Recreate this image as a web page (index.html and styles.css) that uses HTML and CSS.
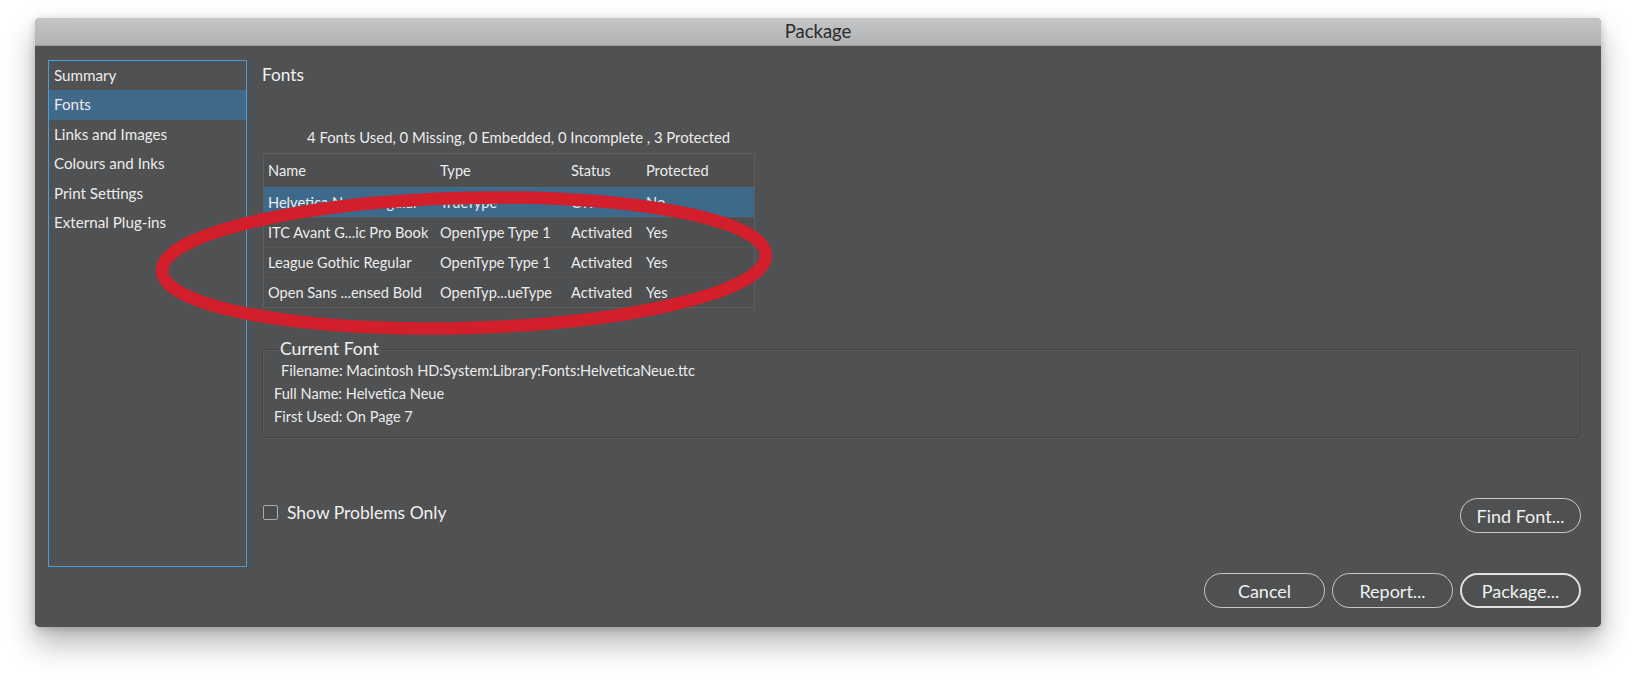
FILE: index.html
```html
<!DOCTYPE html>
<html>
<head>
<meta charset="utf-8">
<title>Package</title>
<link rel="stylesheet" href="styles.css">
</head>
<body>
<div class="window">
  <div class="titlebar">Package</div>
  <div class="content">
    <ul class="sidebar">
      <li class="nav-item">Summary</li>
      <li class="nav-item selected">Fonts</li>
      <li class="nav-item">Links and Images</li>
      <li class="nav-item">Colours and Inks</li>
      <li class="nav-item">Print Settings</li>
      <li class="nav-item">External Plug-ins</li>
    </ul>
    <div class="main">
      <div class="heading">Fonts</div>
      <div class="summary">4 Fonts Used, 0 Missing, 0 Embedded, 0 Incomplete , 3 Protected</div>
      <div class="table">
        <div class="row head">
          <span>Name</span><span>Type</span><span>Status</span><span>Protected</span>
        </div>
        <div class="row selected">
          <span>Helvetica Neue Regular</span><span>TrueType</span><span>OK</span><span>No</span>
        </div>
        <div class="row">
          <span>ITC Avant G...ic Pro Book</span><span>OpenType Type 1</span><span>Activated</span><span>Yes</span>
        </div>
        <div class="row">
          <span>League Gothic Regular</span><span>OpenType Type 1</span><span>Activated</span><span>Yes</span>
        </div>
        <div class="row">
          <span>Open Sans ...ensed Bold</span><span>OpenTyp...ueType</span><span>Activated</span><span>Yes</span>
        </div>
      </div>
      <fieldset class="current">
        <legend>Current Font</legend>
        <div class="info first">Filename: Macintosh HD:System:Library:Fonts:HelveticaNeue.ttc</div>
        <div class="info">Full Name: Helvetica Neue</div>
        <div class="info">First Used: On Page 7</div>
      </fieldset>
      <div class="options">
        <label class="check"><span class="box"></span>Show Problems Only</label>
        <button class="btn">Find Font...</button>
      </div>
      <div class="actions">
        <button class="btn">Cancel</button>
        <button class="btn">Report...</button>
        <button class="btn default">Package...</button>
      </div>
    </div>
  </div>
</div>
<svg class="annotation" width="1636" height="679" viewBox="0 0 1636 679">
  <ellipse cx="464" cy="263" rx="302" ry="65" fill="none" stroke="#d21f2b" stroke-width="12.5" transform="rotate(-1.5 464 263)"/>
</svg>
</body>
</html>
```

FILE: styles.css
```css
* { box-sizing: border-box; }
html, body {
  margin: 0;
  padding: 0;
  background: #ffffff;
  width: 1636px;
  height: 679px;
  overflow: hidden;
  position: relative;
  font-family: "Lato", "Open Sans", "Liberation Sans", sans-serif;
}
.window {
  margin: 18px 0 0 35px;
  width: 1566px;
  height: 609px;
  border-radius: 5px;
  overflow: hidden;
  display: flex;
  flex-direction: column;
  box-shadow: 0 16px 30px rgba(0,0,0,0.30), 0 2px 8px rgba(0,0,0,0.18);
  background: #505152;
}
.titlebar {
  height: 28px;
  flex: 0 0 28px;
  background: linear-gradient(#c5c6c8, #b1b2b4);
  border-bottom: 1px solid #9a9b9d;
  color: #2b2b2b;
  font-size: 18.5px;
  line-height: 27px;
  text-align: center;
}
.content {
  flex: 1;
  display: flex;
  padding: 14px 20px 19px 13px;
  background: #505152;
  color: #ececec;
}
.sidebar {
  list-style: none;
  margin: 0;
  padding: 0;
  width: 199px;
  height: 507px;
  flex: 0 0 199px;
  border: 1px solid #4b9fd4;
}
.nav-item {
  height: 29.4px;
  line-height: 29.4px;
  padding-left: 5px;
  font-size: 15.2px;
  color: #ececec;
}
.nav-item.selected { background: #41698a; }
.main {
  flex: 1;
  margin-left: 15px;
  display: flex;
  flex-direction: column;
}
.heading {
  height: 30px;
  line-height: 30px;
  font-size: 17.3px;
  color: #f0f0f0;
}
.summary {
  margin-top: 37px;
  height: 20px;
  line-height: 20px;
  padding-left: 45px;
  font-size: 14.85px;
}
.table {
  margin-top: 6px;
  margin-left: 1px;
  width: 492px;
  border: 1px solid #5d5e5f;
  background: #4e4f50;
}
.row {
  display: grid;
  grid-template-columns: 172px 131px 75px 1fr;
  height: 30px;
  align-items: center;
  font-size: 14.6px;
  border-top: 1px solid rgba(255,255,255,0.04);
}
.row span { padding-left: 4px; white-space: nowrap; overflow: hidden; }
.row.head { height: 33px; border-top: none; }
.row.selected { background: #3d6a8b; }
.current {
  margin: 31px 0 0 0;
  padding: 0 0 9px 11px;
  border: 1px solid #434445;
  box-shadow: inset 1px 1px 0 #5a5b5c, 1px 1px 0 #5a5b5c;
  border-radius: 4px;
  min-width: 0;
}
.current legend {
  padding: 0 2px;
  margin-left: 4px;
  font-size: 17.6px;
  line-height: 20px;
  color: #f0f0f0;
}
.info {
  height: 23px;
  line-height: 23px;
  font-size: 14.6px;
}
.info.first { padding-left: 7px; }
.options {
  margin-top: 60px;
  display: flex;
  align-items: center;
  justify-content: space-between;
}
.check {
  display: flex;
  align-items: center;
  margin-top: -7px;
  margin-left: 1px;
  font-size: 17.5px;
  color: #f0f0f0;
}
.box {
  width: 15px;
  height: 15px;
  border: 1px solid #a9aaab;
  border-radius: 2px;
  margin-right: 9px;
  background: #4b4c4d;
}
.btn {
  width: 121px;
  height: 35px;
  border-radius: 18px;
  border: 1.5px solid #c9c9c9;
  background: #4f5051;
  color: #f0f0f0;
  font-family: "Lato", "Open Sans", "Liberation Sans", sans-serif;
  font-size: 18px;
  padding: 0;
}
.btn.default { border: 2.5px solid #e2e2e2; }
.actions {
  margin-top: auto;
  display: flex;
  justify-content: flex-end;
  gap: 7px;
}
.annotation {
  position: absolute;
  left: 0;
  top: 0;
  pointer-events: none;
}
```
